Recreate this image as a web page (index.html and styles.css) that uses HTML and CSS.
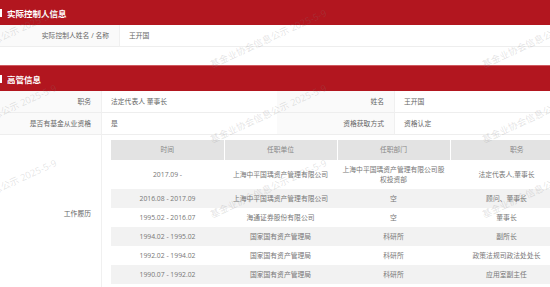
FILE: index.html
```html
<!DOCTYPE html>
<html lang="zh-CN">
<head>
<meta charset="utf-8">
<title>高管信息</title>
<link rel="stylesheet" href="styles.css">
</head>
<body>
<div class="page">
  <section class="panel">
    <h2 class="panel-title">实际控制人信息</h2>
    <div class="kv-single">
      <div class="cell label">实际控制人姓名 / 名称</div>
      <div class="cell value">王开国</div>
    </div>
  </section>

  <section class="panel panel-exec">
    <h2 class="panel-title">高管信息</h2>
    <div class="kv-grid">
      <div class="cell label">职务</div>
      <div class="cell value">法定代表人 董事长</div>
      <div class="cell label">姓名</div>
      <div class="cell value">王开国</div>

      <div class="cell label">是否有基金从业资格</div>
      <div class="cell value">是</div>
      <div class="cell label">资格获取方式</div>
      <div class="cell value">资格认定</div>

      <div class="cell label label-tall">工作履历</div>
      <div class="cell value value-wide">
        <table class="history">
          <thead>
            <tr><th>时间</th><th>任职单位</th><th>任职部门</th><th class="th-last">职务</th></tr>
          </thead>
          <tbody>
            <tr><td>2017.09 -</td><td>上海中平国瑀资产管理有限公司</td><td>上海中平国瑀资产管理有限公司股权投资部</td><td>法定代表人,董事长</td></tr>
            <tr><td>2016.08 - 2017.09</td><td>上海中平国瑀资产管理有限公司</td><td>空</td><td>顾问、董事长</td></tr>
            <tr><td>1995.02 - 2016.07</td><td>海通证券股份有限公司</td><td>空</td><td>董事长</td></tr>
            <tr><td>1994.02 - 1995.02</td><td>国家国有资产管理局</td><td>科研所</td><td>副所长</td></tr>
            <tr><td>1992.02 - 1994.02</td><td>国家国有资产管理局</td><td>科研所</td><td>政策法规司政法处处长</td></tr>
            <tr><td>1990.07 - 1992.02</td><td>国家国有资产管理局</td><td>科研所</td><td>应用室副主任</td></tr>
          </tbody>
        </table>
      </div>
    </div>
  </section>

  <div class="watermarks" aria-hidden="true">
    <span class="wm wm-c1 wm-r1">基金业协会信息公示 2025-5-9</span>
    <span class="wm wm-c2 wm-r1">基金业协会信息公示 2025-5-9</span>
    <span class="wm wm-c3 wm-r1">基金业协会信息公示 2025-5-9</span>
    <span class="wm wm-c1 wm-r2">基金业协会信息公示 2025-5-9</span>
    <span class="wm wm-c2 wm-r2">基金业协会信息公示 2025-5-9</span>
    <span class="wm wm-c3 wm-r2">基金业协会信息公示 2025-5-9</span>
    <span class="wm wm-c1 wm-r3">基金业协会信息公示 2025-5-9</span>
    <span class="wm wm-c2 wm-r3">基金业协会信息公示 2025-5-9</span>
    <span class="wm wm-c3 wm-r3">基金业协会信息公示 2025-5-9</span>
  </div>
</div>
</body>
</html>
```

FILE: styles.css
```css
html, body {
  margin: 0;
  padding: 0;
  overflow: hidden;
  background: #fff;
}

body {
  font-family: "Open Sans", "Noto Sans CJK SC", sans-serif;
  font-size: 6.8px;
  color: #666;
}

.page {
  position: relative;
  width: 572px;
}

.panel-title {
  margin: 0;
  height: 25px;
  background: #b2161f;
  color: #fff;
  font-size: 8.5px;
  font-weight: bold;
  display: flex;
  align-items: center;
  gap: 5px;
  box-sizing: border-box;
}

.panel-title::before {
  content: "";
  width: 2px;
  height: 8px;
  background: #fff;
}

.panel-exec {
  margin-top: 18px;
}

.panel-exec .panel-title {
  height: 26px;
  border-top: 1px solid #cf5a60;
}

.kv-single {
  display: grid;
  grid-template-columns: 120px 1fr;
}

.kv-grid {
  display: grid;
  grid-template-columns: 102px 175px 118px 1fr;
}

.cell {
  display: flex;
  align-items: center;
  min-height: 21px;
  line-height: 10px;
  border-bottom: 1px solid #eeeeee;
  box-sizing: content-box;
}

.label {
  justify-content: flex-end;
  padding-right: 10px;
  background: #fafafa;
  border-right: 1px solid #f0f0f0;
}

.value {
  padding-left: 9px;
}

.kv-grid .label {
  padding-right: 10px;
}

.label-tall {
  background: #fff;
}

.value-wide {
  grid-column: span 3;
  padding: 5px 9px 8px;
  align-items: flex-start;
}

.history {
  width: 452px;
  table-layout: fixed;
  border-collapse: collapse;
  text-align: center;
  color: #777;
}

.history th {
  background: #e3e3e3;
  color: #888;
  font-weight: normal;
  padding: 5px 4px;
  line-height: 10px;
}

.history th + th {
  border-left: 1px solid #fff;
}

.history .th-last {
  padding-left: 24px;
}

.history td {
  padding: 4.5px 4px;
  line-height: 10px;
}

.history tbody tr:nth-child(even) td {
  background: #f2f2f2;
}

.watermarks {
  pointer-events: none;
}

.wm {
  position: absolute;
  font-size: 9.5px;
  line-height: 10px;
  white-space: nowrap;
  color: rgba(128, 128, 128, 0.22);
  transform-origin: 0 100%;
  transform: rotate(-24.6deg);
}

.wm-c1 { left: -57px; }
.wm-c2 { left: 213px; }
.wm-c3 { left: 485px; }
.wm-r1 { top: 60px; }
.wm-r2 { top: 135px; }
.wm-r3 { top: 210px; }
```
